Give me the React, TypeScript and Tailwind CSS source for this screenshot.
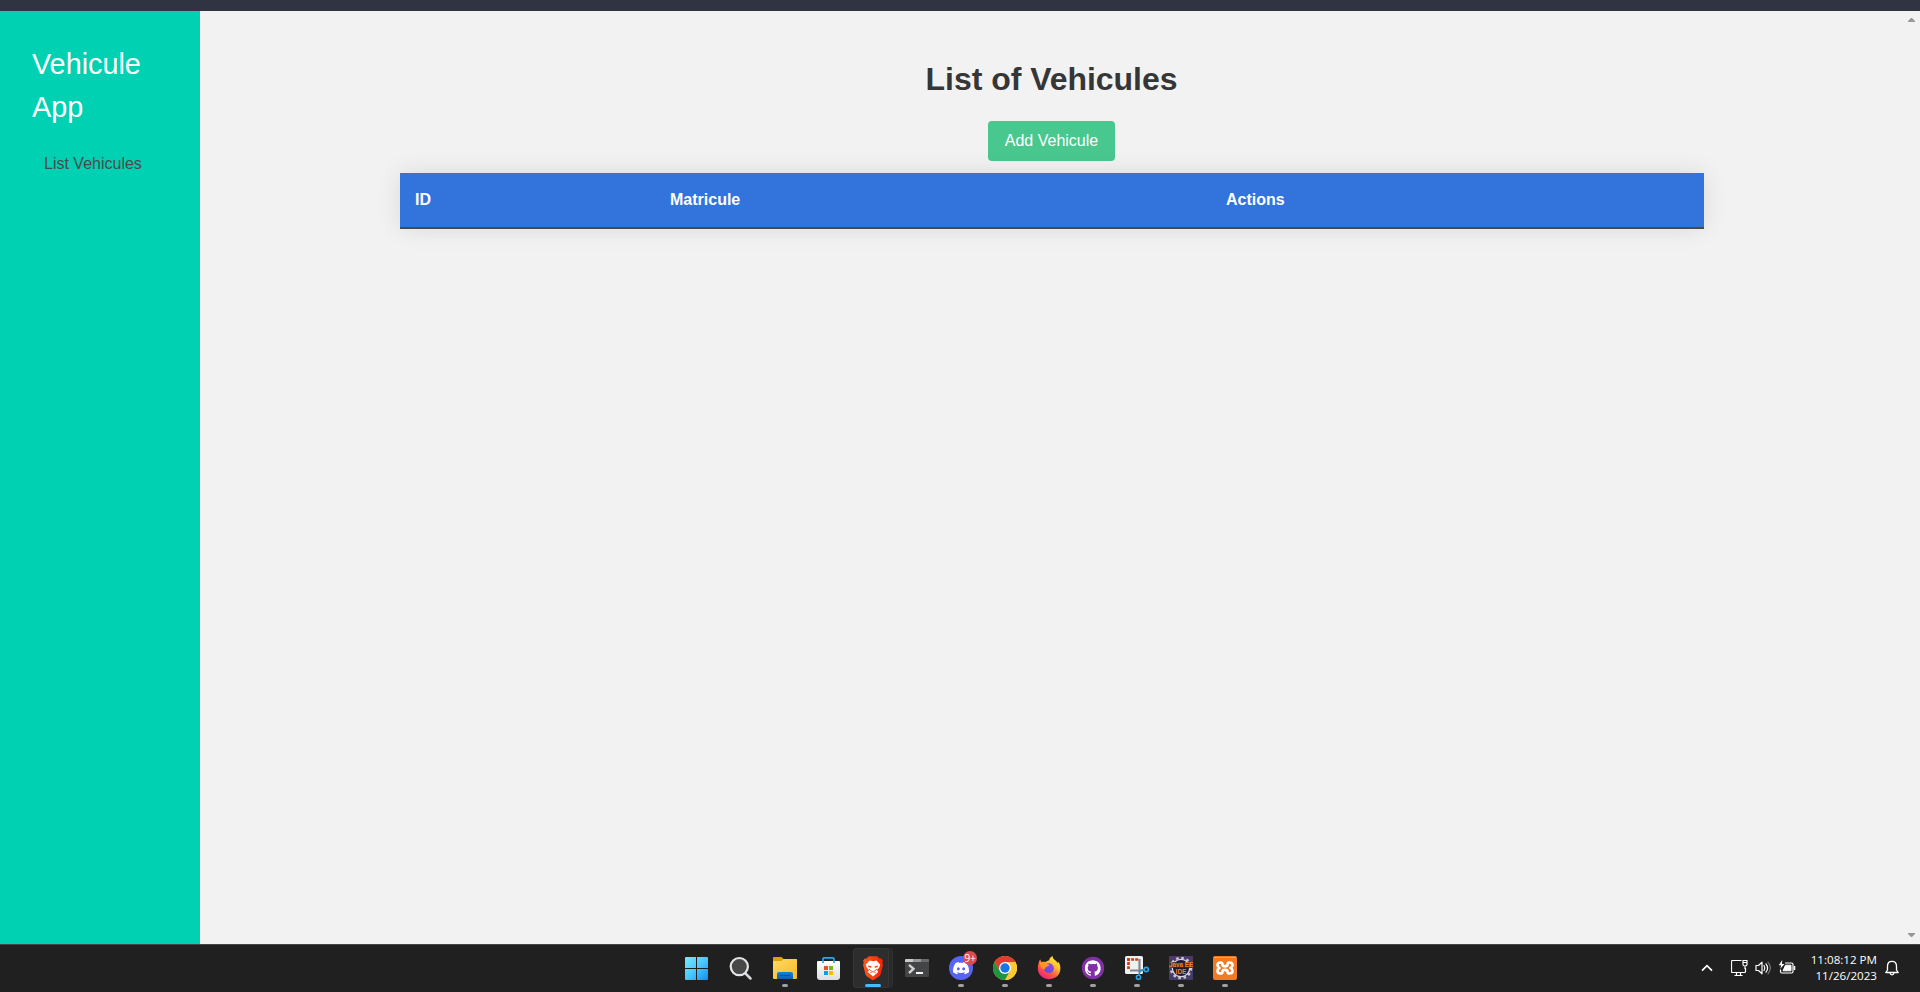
import React from "react";
import { SiDiscord, SiGithub } from "react-icons/si";

function StartIcon() {
  return (
    <svg width="24" height="24" viewBox="0 0 24 24">
      <defs>
        <linearGradient id="win" x1="0" y1="1" x2="23" y2="24" gradientUnits="userSpaceOnUse">
          <stop offset="0" stopColor="#74eafe" />
          <stop offset="0.500" stopColor="#4cc8fc" />
          <stop offset="1" stopColor="#108ff2" />
        </linearGradient>
      </defs>
      <path
        d="M0 2q0-1 1-1h10v11H0zM12 1h10q1 0 1 1v10H12zM0 13h11v11H1q-1 0-1-1zM12 13h11v10q0 1-1 1H12z"
        fill="url(#win)"
      />
    </svg>
  );
}

function SearchIcon() {
  return (
    <svg width="24" height="24" viewBox="0 0 24 24">
      <path d="M16.500 17.500l5 5" stroke="#d5d8dc" strokeWidth="2.500" strokeLinecap="round" />
      <circle cx="10.300" cy="10.600" r="8.600" fill="#484848" stroke="#e3e5e8" strokeWidth="2.200" />
    </svg>
  );
}

function ExplorerIcon() {
  return (
    <svg width="24" height="24" viewBox="0 0 24 24">
      <defs>
        <linearGradient id="folder" x1="0" y1="0" x2="1" y2="1">
          <stop offset="0" stopColor="#ffda69" />
          <stop offset="1" stopColor="#f8b91f" />
        </linearGradient>
        <linearGradient id="pocket" x1="0" y1="0" x2="0" y2="1">
          <stop offset="0" stopColor="#187fd7" />
          <stop offset="1" stopColor="#0862b2" />
        </linearGradient>
      </defs>
      <path d="M0 2q0-1 1-1h7.500l2 2H23q1 0 1 1v6H0z" fill="#dfa108" />
      <path d="M0 5h8.500l2-2H23q1 0 1 1v18q0 1-1 1H1q-1 0-1-1z" fill="url(#folder)" />
      <path d="M4 23v-5q0-2 2-2h12q2 0 2 2v5z" fill="url(#pocket)" />
      <path d="M7 19.500h10" stroke="#0b539c" strokeWidth="1" />
    </svg>
  );
}

function StoreIcon() {
  return (
    <svg width="24" height="24" viewBox="0 0 24 24">
      <defs>
        <linearGradient id="bag" x1="0" y1="0" x2="0" y2="1">
          <stop offset="0" stopColor="#ffffff" />
          <stop offset="1" stopColor="#dcdde0" />
        </linearGradient>
      </defs>
      <path d="M0 6q0-1 1-1h21q1 0 1 1v15q0 3-3 3H3q-3 0-3-3z" fill="url(#bag)" />
      <path d="M6 7V3q0-1.200 1.200-1.200h8.600Q17 1.800 17 3v4" fill="none" stroke="#29a8ea" strokeWidth="1.700" />
      <path d="M7 10h4v4H7z" fill="#f04f24" />
      <path d="M12 10h4v4h-4z" fill="#7fb900" />
      <path d="M7 15h4v4H7z" fill="#02a3ee" />
      <path d="M12 15h4v4h-4z" fill="#ffb802" />
    </svg>
  );
}

function BraveIcon() {
  return (
    <svg width="24" height="24" viewBox="0 0 24 24">
      <defs>
        <linearGradient id="brave" x1="0" y1="0" x2="1" y2="0">
          <stop offset="0" stopColor="#fb5a24" />
          <stop offset="1" stopColor="#f62300" />
        </linearGradient>
      </defs>
      <path
        d="M7.600 0.200h8.800l2.200 2.400 2-.2 1.800 2.400-.8 1.900.8 2-2.500 9.500q-.5 1.600-2 2.600l-4.300 2.800q-1.600.9-3.200 0l-4.300-2.800q-1.500-1-2-2.600L1.600 8.700l.8-2-.8-1.900 1.800-2.400 2 .2z"
        transform="translate(0.500 0) scale(0.960 1)"
        fill="url(#brave)"
      />
      <path
        d="M12 5.200l3.400-.8 3.800 4.200-.9 3-2.200 2.500 1 2-1.500 1.500-3.600 3-3.600-3-1.500-1.500 1-2-2.200-2.500-.9-3 3.800-4.200z"
        fill="#fff"
      />
      <path d="M6.800 9.400l3.700.9-.3 1.500-2.600-.5zM17.200 9.400l-3.700.9.3 1.500 2.600-.5z" fill="#f9421a" />
      <path d="M8 13.200l2.700 1.900M16 13.200l-2.700 1.900M9.300 16.700l2.700-1.200 2.700 1.200" fill="none" stroke="#fa4a1c" strokeWidth="0.900" />
    </svg>
  );
}

function TerminalIcon() {
  return (
    <svg width="24" height="24" viewBox="0 0 24 24">
      <rect x="0" y="3" width="24" height="18" rx="1.200" fill="#444546" />
      <path d="M0 6V4q0-1 1-1h7v3z" fill="#cacaca" />
      <path d="M8 3h8v3H8z" fill="#999" />
      <path d="M16 3h7q1 0 1 1v2h-8z" fill="#6b6b6b" />
      <path d="M4 8.800l4.500 4-4.500 4.200" fill="none" stroke="#d2d2d2" strokeWidth="2.400" />
      <path d="M11 17h7" stroke="#f6f6f6" strokeWidth="2" />
    </svg>
  );
}

function DiscordIcon() {
  return (
    <svg width="24" height="24" viewBox="0 0 24 24">
      <circle cx="12" cy="12" r="12" fill="#5765f2" />
      <SiDiscord x={4} y={4.2} width={16} height={16} fill="#fff" />
    </svg>
  );
}

function ChromeIcon() {
  return (
    <svg width="24" height="24" viewBox="0 0 24 24">
      <circle cx="12" cy="12" r="12" fill="#fcc934" />
      <path d="M1.600 6A12 12 0 0 1 22.400 6H12L6.800 15z" fill="#e33b2e" />
      <path d="M1.600 6A12 12 0 0 0 12 24l5.200-9L12 12 6.800 15z" fill="#229342" />
      <path d="M22.400 6A12 12 0 0 1 12 24l5.200-9L12 6z" fill="#fcc934" />
      <circle cx="12" cy="12" r="6" fill="#fff" />
      <circle cx="12" cy="12" r="4.700" fill="#1c73e8" />
    </svg>
  );
}

function FirefoxIcon() {
  return (
    <svg width="24" height="24" viewBox="0 0 24 24">
      <defs>
        <linearGradient id="fox" x1="0.850" y1="0" x2="0.200" y2="1">
          <stop offset="0" stopColor="#fff04a" />
          <stop offset="0.350" stopColor="#ffc02c" />
          <stop offset="0.650" stopColor="#ff5a3d" />
          <stop offset="1" stopColor="#ef158a" />
        </linearGradient>
        <linearGradient id="globe" x1="0" y1="1" x2="1" y2="0">
          <stop offset="0" stopColor="#5250dd" />
          <stop offset="1" stopColor="#9b45ef" />
        </linearGradient>
      </defs>
      <path d="M3.200 3.300c.2 1 .6 1.900 1.200 2.600 1.400-.4 2.800-.3 4 .2 1.100-1 2.400-1.600 3.800-1.900C12 2.800 14 .8 15.700 0c-.3 3 3 4.200 4.300 6 .4.500.7 1 .9 1.500.1-.7 0-1.300-.1-1.900 2.400 2.200 3 5.300 2.400 9C22.200 20 17.600 23.300 12 23.300 5.500 23.300.8 18.400.8 12.600c0-3.700 1-6.900 2.400-9.300z" fill="url(#fox)" />
      <circle cx="12" cy="12.200" r="4.900" fill="url(#globe)" />
      <path d="M3 7.200c1-1.500 3.500-1.800 5.500-.5L12.500 9c-.6 1.300-2 1.500-3.300 1.900-1.300.5-.3 2.200-2.300 2.200C4.200 13 3 10 3 7.200z" fill="#ff9429" />
    </svg>
  );
}

function GithubIcon() {
  return (
    <svg width="24" height="24" viewBox="0 0 24 24">
      <circle cx="12" cy="12" r="11.200" fill="#8130a8" />
      <SiGithub x={3.8} y={4} width={16.4} height={16.4} fill="#fff" />
    </svg>
  );
}

function SnipIcon() {
  return (
    <svg width="24" height="24" viewBox="0 0 24 24" overflow="visible">
      <rect x="0" y="0" width="18" height="18" rx="1.500" fill="#eff0f2" />
      <path d="M2 3.500h11.500M3.500 2v11" fill="none" stroke="#d83b01" strokeWidth="2.700" strokeDasharray="3 1.100" />
      <path d="M14.500 3v13.500M5 14.500h13" stroke="#80868d" strokeWidth="2.200" />
      <path d="M15 15l-1.200 4M15 14.500l4-.7" stroke="#258ccf" strokeWidth="1.500" />
      <circle cx="21.200" cy="13.500" r="2.100" fill="none" stroke="#29a5ea" strokeWidth="1.600" />
      <circle cx="13.500" cy="21.300" r="2.100" fill="none" stroke="#29a5ea" strokeWidth="1.600" />
    </svg>
  );
}

function EclipseIcon() {
  return (
    <svg className="overflow-visible" width="24" height="24" viewBox="0 0 24 24">
      <defs>
        <linearGradient id="ide" x1="0" y1="0" x2="0" y2="1">
          <stop offset="0" stopColor="#50376c" />
          <stop offset="1" stopColor="#453b68" />
        </linearGradient>
      </defs>
      <rect width="24" height="24" rx="1" fill="url(#ide)" />
      <circle cx="12" cy="12" r="10.100" fill="none" stroke="#c9cbd0" strokeWidth="2.400" strokeDasharray="2.600 2.690" />
      <circle cx="12" cy="12" r="8.700" fill="#1d1a2d" stroke="#d7d7dc" strokeWidth="1.300" />
      <path d="M1 6h22v6H1z" fill="#38263a" opacity="0.800" />
      <text x="12" y="11.300" textAnchor="middle" className="font-['Liberation_Sans'] text-[6.300px] font-bold" fill="#ef8622">Java EE</text>
      <text x="12" y="17.500" textAnchor="middle" className="font-['Liberation_Sans'] text-[6.500px] font-bold" fill="#ef8622">IDE</text>
    </svg>
  );
}

function XamppIcon() {
  return (
    <svg width="24" height="24" viewBox="0 0 24 24">
      <rect width="24" height="24" rx="2" fill="#f17a24" />
      <path d="M1 1.500h22" stroke="#f8a365" strokeWidth="1" />
      <path
        d="M7.500 6.500Q9.500 6.500 9.500 8.500Q9.500 10.300 12 10.300Q14.500 10.300 14.500 8.500Q14.500 6.500 16.500 6.500Q19.500 6.500 19.500 9Q19.500 11 17.500 12Q19.500 13 19.500 15Q19.500 17.500 16.500 17.500Q14.500 17.500 14.500 15.700Q14.500 13.900 12 13.900Q9.500 13.900 9.500 15.700Q9.500 17.500 7.500 17.500Q4.500 17.500 4.500 15Q4.500 13 6.500 12Q4.500 11 4.500 9Q4.500 6.500 7.500 6.500z"
        fill="none"
        stroke="#fff"
        strokeWidth="2.700"
        strokeLinejoin="round"
      />
    </svg>
  );
}

type Task = { name: string; icon: React.ReactNode; running?: boolean; active?: boolean; badge?: string };

const tasks: Task[] = [
  { name: "start", icon: <StartIcon /> },
  { name: "search", icon: <SearchIcon /> },
  { name: "explorer", icon: <ExplorerIcon />, running: true },
  { name: "store", icon: <StoreIcon /> },
  { name: "brave", icon: <BraveIcon />, active: true },
  { name: "terminal", icon: <TerminalIcon /> },
  { name: "discord", icon: <DiscordIcon />, running: true, badge: "9+" },
  { name: "chrome", icon: <ChromeIcon />, running: true },
  { name: "firefox", icon: <FirefoxIcon />, running: true },
  { name: "github", icon: <GithubIcon />, running: true },
  { name: "snip", icon: <SnipIcon />, running: true },
  { name: "eclipse", icon: <EclipseIcon />, running: true },
  { name: "xampp", icon: <XamppIcon />, running: true },
];

function TaskButton({ task }: { task: Task }) {
  return (
    <div className="relative flex h-[46px] w-11 items-center justify-center">
      {task.active && (
        <>
          <span className="absolute top-[3px] left-1 h-10 w-[38px] rounded-[4px] bg-[#292929] ring-1 ring-[#303030] ring-inset" />
          <span className="absolute top-[3px] left-[2px] h-10 w-[36px] rounded-[4px] bg-[#2d2d2d] ring-1 ring-[#363636] ring-inset" />
        </>
      )}
      <div className="relative">{task.icon}</div>
      {task.badge && (
        <span className="absolute top-[6px] left-[24px] flex h-[14px] w-[14px] items-center justify-center rounded-full bg-[#e0484d] font-['Open_Sans',sans-serif] text-[10.500px] leading-[14px] font-medium tracking-[-0.300px] text-white">
          {task.badge}
        </span>
      )}
      {task.active && <span className="absolute top-[39px] left-[14px] h-[3px] w-4 rounded-full bg-[#4cb8f5]" />}
      {task.running && <span className="absolute top-[39px] left-[19px] h-[3px] w-[6px] rounded-full bg-[#a0a0a0]" />}
    </div>
  );
}

function Tray() {
  return (
    <div className="flex h-[46px] items-center pr-[21px] text-white">
      <svg className="mr-[-1px] ml-[1px]" width="12" height="12" viewBox="0 0 12 12" fill="none" stroke="currentColor" strokeWidth="1.700">
        <path d="M1 8.700l5-5 5 5" />
      </svg>
      <svg className="ml-[19px]" width="17" height="18" viewBox="0 0 17 18" fill="none" stroke="currentColor" strokeWidth="1.200">
        <path d="M10.500 1.500h-9q-1 0-1 1v10q0 1 1 1h12q1 0 1-1V9M5.500 13.500v3M9.500 13.500v3M3.500 16.500h8" />
        <path d="M12 1.500h4v4q0 1.500-2 1.500t-2-1.500zM12 3.500h4M14 7v3" />
      </svg>
      <svg className="ml-[7px]" width="17" height="16" viewBox="0 0 17 16" fill="none" stroke="currentColor" strokeWidth="1.200" strokeLinecap="round" strokeLinejoin="round">
        <path d="M1 5.500h2.500L7 2.200v11.600l-3.500-3.300H1z" />
        <path d="M9 5.500q1.600 2.500 0 5M11 3.800q3.200 4.200 0 8.400" />
        <path d="M13 2.200q4.700 5.800 0 11.600" stroke="#777" />
      </svg>
      <svg className="mr-[1px] ml-[6px]" width="18" height="16" viewBox="0 0 18 16" fill="none" stroke="currentColor">
        <path d="M7 3h6.500Q15 3 15 4.500v7q0 1.500-1.500 1.500H4q-1.500 0-1.500-1.500V9.500" strokeWidth="1.200" />
        <path d="M7.500 5.200H13v5.600H5z" fill="currentColor" />
        <path d="M16.500 6v4" strokeWidth="1.500" />
        <path d="M4.200 0L.8 5.200h2.400L2.300 8.800 6.500 4H4z" fill="currentColor" stroke="none" />
      </svg>
      <div className="ml-3 w-[68px] text-right font-['Open_Sans','Noto_Sans',sans-serif] text-[11.600px] leading-4 whitespace-nowrap">
        <div>11:08:12 PM</div>
        <div>11/26/2023</div>
      </div>
      <svg className="ml-2" width="14" height="16" viewBox="0 0 14 16" fill="none" stroke="currentColor" strokeWidth="1.300" strokeLinejoin="round">
        <path d="M2.500 10V6.200Q2.500 1.300 7 1.300t4.500 4.900V10l1.700 2.500H.8z" />
        <path d="M5 13q.3 1.800 2 1.800T9 13" />
      </svg>
    </div>
  );
}

const columns = [
  { title: "ID", className: "w-[255px]" },
  { title: "Matricule", className: "w-[556px]" },
  { title: "Actions", className: "w-[493px]" },
];

export default function App() {
  return (
    <div className="flex h-[992px] w-[1920px] flex-col overflow-hidden bg-[#f2f2f2] font-['Liberation_Sans',Arial,sans-serif]">
      <div className="h-[11px] shrink-0 bg-[#303341]" />
      <div className="flex min-h-0 flex-1">
        <aside className="w-[200px] shrink-0 bg-[#00d1b2] px-8 pt-8">
          <div className="text-[28.800px] leading-[43.200px] text-white">Vehicule App</div>
          <a className="mt-[23px] ml-3 block text-base leading-6 text-[#4a4a4a]">List Vehicules</a>
        </aside>
        <main className="flex flex-1 flex-col items-center pt-[50px]">
          <h1 className="mr-[1px] text-[32px] leading-9 font-bold tracking-[-0.040px] text-[#363636]">List of Vehicules</h1>
          <button className="mt-6 mr-[1px] h-10 w-[127px] rounded bg-[#48c78e] text-base text-white">Add Vehicule</button>
          <table className="mt-3 w-[1304px] table-fixed border-collapse shadow-[0_0_25px_rgba(0,0,0,0.100)]">
            <thead>
              <tr className="border-b-2 border-[#4a4a4a] bg-[#3273dc] text-left text-white">
                {columns.map((c) => (
                  <th key={c.title} className={`${c.className} px-[15px] py-[15px] text-base leading-6 font-bold`}>
                    {c.title}
                  </th>
                ))}
              </tr>
            </thead>
          </table>
        </main>
        <div className="flex w-4 shrink-0 flex-col items-center justify-between py-[7px]">
          <svg className="mr-[1px]" width="7" height="4" viewBox="0 0 7 4" fill="#979797">
            <path d="M3 0h1l3 3v1H0V3z" />
          </svg>
          <svg className="mr-[1px]" width="7" height="4" viewBox="0 0 7 4" fill="#979797">
            <path d="M0 0h7v1L4 4H3L0 1z" />
          </svg>
        </div>
      </div>
      <footer className="grid h-12 shrink-0 grid-cols-[675px_572px_1fr] border-t border-[#454545] bg-[#202020]">
        <div />
        <div className="flex">
          {tasks.map((t) => (
            <TaskButton key={t.name} task={t} />
          ))}
        </div>
        <div className="flex justify-end">
          <Tray />
        </div>
      </footer>
    </div>
  );
}
